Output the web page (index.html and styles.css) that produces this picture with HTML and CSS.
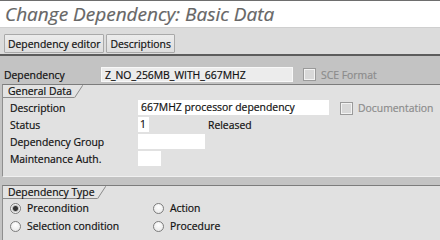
FILE: index.html
```html
<!DOCTYPE html>
<html lang="en">
<head>
<meta charset="UTF-8">
<title>Change Dependency: Basic Data</title>
<link rel="stylesheet" href="styles.css">
</head>
<body>
<div class="titlebar"><h1>Change Dependency: Basic Data</h1></div>

<div class="toolbar">
  <button class="tbtn">Dependency editor</button>
  <button class="tbtn">Descriptions</button>
</div>

<div class="screen">
  <!-- key field -->
  <div class="keyrow">
    <span class="keylbl">Dependency</span>
    <span class="field ro keyfield">Z_NO_256MB_WITH_667MHZ</span>
    <span class="check off"></span>
    <span class="muted">SCE Format</span>
  </div>

  <!-- General Data -->
  <div class="group">
    <div class="gtitle"><span>General Data</span><svg class="slant" width="9" height="13" viewBox="0 0 9 13"><polygon points="0,0 9,0 0,13" fill="#e3e3e3"/><line x1="0.5" y1="12.8" x2="8.8" y2="0.2" stroke="#8a8a8a" stroke-width="1"/></svg></div>
    <div class="gbody">
      <div class="frow">
        <span class="flbl">Description</span>
        <span class="field desc">667MHZ processor dependency</span>
        <span class="check off doccheck"></span>
        <span class="muted">Documentation</span>
      </div>
      <div class="frow">
        <span class="flbl">Status</span>
        <span class="field stat">1</span>
        <span class="stattext">Released</span>
      </div>
      <div class="frow">
        <span class="flbl">Dependency Group</span>
        <span class="field grp"></span>
      </div>
      <div class="frow">
        <span class="flbl">Maintenance Auth.</span>
        <span class="field auth"></span>
      </div>
    </div>
  </div>

  <!-- Dependency Type -->
  <div class="group second">
    <div class="gtitle"><span>Dependency Type</span><svg class="slant" width="9" height="13" viewBox="0 0 9 13"><polygon points="0,0 9,0 0,13" fill="#e3e3e3"/><line x1="0.5" y1="12.8" x2="8.8" y2="0.2" stroke="#8a8a8a" stroke-width="1"/></svg></div>
    <div class="radios">
      <label class="ropt"><span class="radio on"></span>Precondition</label>
      <label class="ropt"><span class="radio"></span>Action</label>
      <label class="ropt"><span class="radio"></span>Selection condition</label>
      <label class="ropt"><span class="radio"></span>Procedure</label>
    </div>
  </div>
</div>
</body>
</html>
```
FILE: styles.css
```css
body{margin:0;width:440px;height:240px;overflow:hidden;background:#c3c3c3;font-family:"Open Sans","DejaVu Sans",sans-serif;font-size:10.4px;color:#111;-webkit-text-stroke:0.2px #111;}
/* title bar */
.titlebar{background:#fff;border-top:1px solid #6e6e6e;border-bottom:1px solid #cfcfcf;box-sizing:border-box;height:28px;}
.titlebar h1{margin:0;padding:2px 0 0 5px;font-size:19px;font-weight:normal;font-style:italic;color:#666;line-height:22px;-webkit-text-stroke:0.2px #666;}
/* toolbar */
.toolbar{box-sizing:border-box;background:#dcdcdc;padding:6px 4px 0 4px;display:flex;gap:2px;border-bottom:2px solid #5c5c5c;height:28px;}
.tbtn{height:19px;padding:0 3px;font-family:inherit;font-size:10.4px;color:#111;-webkit-text-stroke:0.2px #111;background:linear-gradient(#ececec,#dedede);border:1px solid #a9a9a9;border-radius:1px;line-height:16px;}
/* key row */
.keyrow{display:flex;align-items:center;height:15px;padding:11px 0 2px 4px;}
.keylbl{width:97px;}
.field{display:inline-block;box-sizing:border-box;height:15px;line-height:14px;background:#fff;padding:0 3px;}
.field.ro{background:#ececec;border:1px solid #f8f8f8;}
.keyfield{width:192px;margin-right:10px;}
.check{display:inline-block;width:13px;height:13px;box-sizing:border-box;border:1px solid #9a9a9a;box-shadow:inset 0 0 0 1px #f2f2f2;background:#d8d8d8;margin-right:5px;}
.muted{color:#8c8c8c;-webkit-text-stroke:0.2px #8c8c8c;}
/* group boxes */
.group{margin-left:2px;background:#e1e1e1;border-top:1px solid #7c7c7c;border-left:1px solid #8e8e8e;border-bottom:1px solid #f0f0f0;}
.group.second{margin-top:8px;border-bottom:none;height:60px;}
.gtitle{display:flex;height:13px;}
.gtitle span{display:block;height:12px;line-height:12px;padding:0 2px 0 5px;background:#e3e3e3;border-bottom:1px solid #8a8a8a;}
.slant{display:block;}
.gbody{padding:1px 0 9px 0;}
.frow{display:flex;align-items:center;height:17px;}
.flbl{width:128px;padding-left:7px;}
.desc{width:191px;margin-right:11px;}
.doccheck{margin-top:1px;}
.stat{width:11px;padding:0 2px;}
.stattext{margin-left:59px;}
.grp{width:67px;}
.auth{width:23px;}
/* radios */
.radios{display:grid;grid-template-columns:143px 1fr;padding:0 0 0 7px;}
.ropt{display:flex;align-items:center;height:18px;}
.radio{display:inline-block;width:11px;height:11px;box-sizing:border-box;border-radius:50%;border:1px solid #7c7c7c;background:radial-gradient(circle at 50% 35%,#fff,#e4e4e4);margin-right:6px;}
.radio.on{background:radial-gradient(circle,#333 0,#333 2px,#bbb 3px,#f4f4f4 4px);}
```
